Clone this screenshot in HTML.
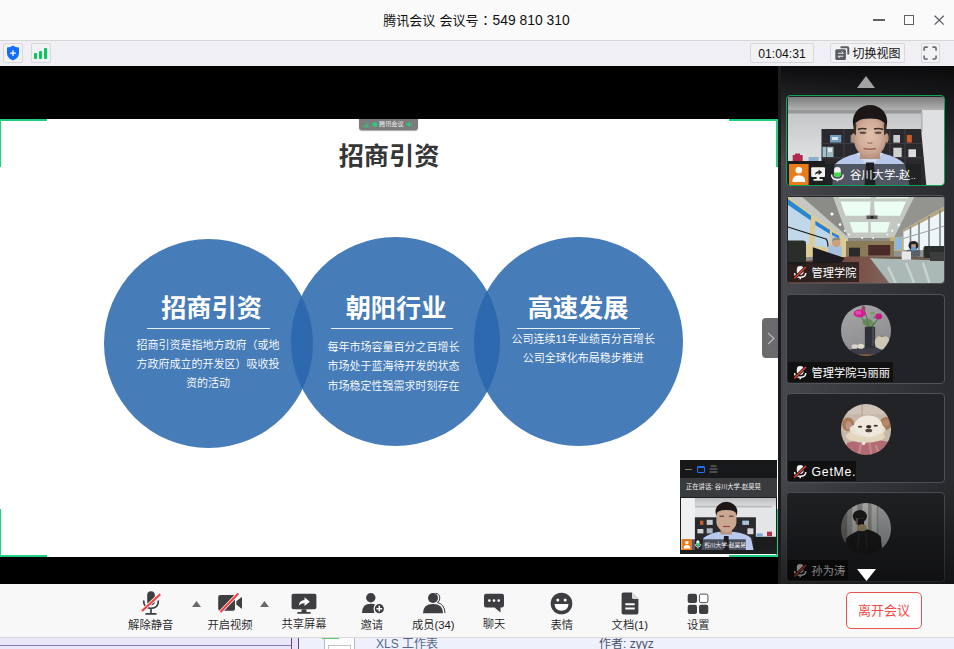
<!DOCTYPE html>
<html><head><meta charset="utf-8">
<style>
*{box-sizing:border-box;margin:0;padding:0}
html,body{width:954px;height:649px;overflow:hidden;background:#000;font-family:"Liberation Sans","Noto Sans CJK SC",sans-serif;}
.abs{position:absolute}
#titlebar{position:absolute;left:0;top:0;width:954px;height:41px;background:#fafafa;border-bottom:1px solid #d6d6d9}
#title{position:absolute;left:0;top:11px;width:954px;text-align:center;font-size:13px;color:#111;line-height:18px}
#bar2{position:absolute;left:0;top:41px;width:954px;height:25px;background:#f0f0f4}
.btn2{position:absolute;top:43px;height:20px;border:1px solid #d8d8dc;border-radius:2px;background:#f2f2f5;font-size:13px;color:#222;line-height:18px;text-align:center}
#main{position:absolute;left:0;top:66px;width:781px;height:518px;background:#000}
#slide{position:absolute;left:0;top:119px;width:778px;height:438px;background:#fff;overflow:hidden}
#right{position:absolute;left:781px;top:66px;width:173px;height:518px;background:#1b1c1e}
#bottombar{position:absolute;left:0;top:583.500px;width:954px;height:54px;background:#f8f8f9}
#strip{position:absolute;left:0;top:637.500px;width:954px;height:12px;background:#eef0fb;overflow:hidden}

#slide .circ{position:absolute;border-radius:50%;background:rgba(40,103,172,.86)}
.h2{position:absolute;color:#fff;font-weight:700;font-size:25.2px;line-height:30px;text-align:center;width:160px;white-space:nowrap}
.hr{position:absolute;height:1px;background:#e8f0f8}
.tx{position:absolute;color:#fff;font-weight:350;font-size:11px;line-height:19.4px;text-align:center;width:200px;white-space:nowrap}
#stitle{position:absolute;left:289px;top:21.5px;width:200px;text-align:center;font-weight:700;font-size:25.2px;line-height:30px;color:#363636}
.gl{position:absolute;background:#1fd17f}

#title{left:383.2px;top:11.3px;width:auto;text-align:left;white-space:nowrap;word-spacing:.7px}
#title .col{display:inline-block;width:14px;text-align:center;font-family:"Liberation Sans","Noto Sans CJK JP",sans-serif}
#title .num{font-size:13.9px;word-spacing:0}
.wc{position:absolute;background:#5f6168}

#right{background:linear-gradient(90deg,#46484d 0,#3a3c40 35%,#2a2b2e 100%);overflow:hidden}
#right .gt{position:absolute;left:0;top:0;width:173px;height:95px;background:linear-gradient(rgba(8,8,9,.93),rgba(8,8,9,.55) 35%,rgba(8,8,9,0));pointer-events:none}
#right .gb{position:absolute;left:0;top:410px;width:173px;height:108px;background:linear-gradient(rgba(0,0,0,0),rgba(0,0,0,.55));pointer-events:none}
.tile{position:absolute;left:5.300px;width:159px;height:90.500px;border:1px solid #505257;border-radius:4px;background:#222326;overflow:hidden}
.tile svg.ph{position:absolute;left:1px;top:1px}
.lab{position:absolute;left:1px;bottom:1px;height:20px;background:rgba(14,14,15,.82);color:#fff;font-size:11.200px;line-height:22.500px;padding-left:23.300px;padding-right:3px;white-space:nowrap;overflow:hidden}
.lab svg{position:absolute;left:5px;top:2.500px}
.av{position:absolute;left:53.700px;width:50.500px;height:50.500px;border-radius:50%;overflow:hidden}

#bottombar{border-bottom:1px solid #d9d9dc}
.tb{position:absolute;top:618px;font-size:11.300px;font-weight:350;line-height:14px;color:#1c1c1c;white-space:nowrap;transform:translateX(-50%)}
.ic{position:absolute}
#leave{position:absolute;left:846px;top:591.500px;width:76px;height:37px;border:1px solid #f0514f;border-radius:5px;background:#fefefe;color:#f04a48;font-size:13px;line-height:35px;text-align:center}

#split{position:absolute;left:778px;top:66px;width:3.500px;height:518px;background:#1a1b1d}
#handle{position:absolute;left:762px;top:318px;width:16px;height:40px;background:#6b6b6b;border-radius:4px 0 0 4px}
#mini{position:absolute;left:680px;top:460px;width:97px;height:94px;background:#1d1e20;overflow:hidden}
#tag{position:absolute;left:359px;top:119px;width:58.500px;height:10.500px;background:#7b7b7b;border-radius:0 0 3px 3px;box-shadow:0 .5px 1px rgba(0,0,0,.35)}
</style></head><body>
<div id="titlebar"></div>
<div id="title">腾讯会议 会议号<span class="col">：</span><span class="num">549 810 310</span></div>
<div class="wc" style="left:873px;top:19.3px;width:12px;height:1.4px"></div>
<div style="position:absolute;left:904px;top:15px;width:10px;height:10px;border:1.3px solid #5f6168"></div>
<svg style="position:absolute;left:933px;top:14px" width="13" height="13" viewBox="0 0 13 13"><path d="M1.6 1.8L10.8 10.6M10.8 1.8L1.6 10.6" stroke="#5f6168" stroke-width="1.3" fill="none"/></svg>
<div id="bar2"></div>
<div class="btn2" style="left:3.300px;width:19.500px"></div>
<svg style="position:absolute;left:6px;top:45px" width="14" height="16" viewBox="0 0 14 16"><path d="M7 .6C8.600 1.900 10.600 2.400 13 2.400V8c0 3.600-2.600 6-6 7.400C3.600 14 1 11.600 1 8V2.400C3.400 2.400 5.400 1.900 7 .6Z" fill="#0f6eff"/><path d="M7 5.200V11M4.100 8.100H9.900" stroke="#fff" stroke-width="1.300"/></svg>
<div class="btn2" style="left:31px;width:20px"></div>
<svg style="position:absolute;left:34px;top:47px" width="14" height="12" viewBox="0 0 14 12"><rect x="0" y="6" width="3.100" height="5.900" rx="1" fill="#09c45f"/><rect x="5" y="4" width="3.100" height="7.900" rx="1" fill="#09c45f"/><rect x="10" y=".9" width="3.100" height="11" rx="1" fill="#09c45f"/></svg>
<div class="btn2" style="left:750px;width:64px;font-size:12.2px;line-height:20.500px;color:#111">01:04:31</div>
<div class="btn2" style="left:830px;width:75px;font-size:12px;line-height:20px;text-align:left;padding-left:21.500px;color:#111">切换视图</div>
<svg style="position:absolute;left:835px;top:45.500px" width="15" height="15" viewBox="0 0 15 15"><path d="M5.500 1.300H12.300Q13.300 1.300 13.300 2.300V8.500" stroke="#5a5c64" stroke-width="2" fill="none"/><rect x=".3" y="3.300" width="10.600" height="10.800" rx="1.500" fill="#5a5c64"/><path d="M3 7.300H8.300M3 10.300H8.300" stroke="#e8e8ec" stroke-width="1.100"/><path d="M6.500 5.500L8.500 7.300M4.800 12.100L3 10.300" stroke="#e8e8ec" stroke-width="1"/></svg>
<div class="btn2" style="left:920.500px;width:19px"></div>
<svg style="position:absolute;left:923px;top:46px" width="14.200" height="14.200" viewBox="0 0 15 15"><path d="M1.200 5V2.500Q1.200 1.200 2.500 1.200H5M10 1.200H12.500Q13.800 1.200 13.800 2.500V5M13.800 10V12.500Q13.800 13.800 12.500 13.800H10M5 13.800H2.500Q1.200 13.800 1.200 12.500V10" stroke="#686a72" stroke-width="1.700" fill="none"/></svg>
<div id="main"></div>
<div id="slide">
<div id="stitle">招商引资</div>
<div class="circ" style="left:103.5px;top:119.5px;width:209px;height:209px"></div>
<div class="circ" style="left:290.5px;top:118px;width:209px;height:209px"></div>
<div class="circ" style="left:473.5px;top:118.2px;width:209px;height:209px"></div>
<div class="h2" style="left:131.5px;top:174.2px">招商引资</div>
<div class="h2" style="left:316px;top:174.2px">朝阳行业</div>
<div class="h2" style="left:498px;top:174.2px">高速发展</div>
<div class="hr" style="left:147px;top:209px;width:123px"></div>
<div class="hr" style="left:331px;top:209px;width:122px"></div>
<div class="hr" style="left:517px;top:209px;width:123px"></div>
<div class="tx" style="left:108px;top:216.5px">招商引资是指地方政府（或地<br>方政府成立的开发区）吸收投<br>资的活动</div>
<div class="tx" style="left:293.5px;top:219px">每年市场容量百分之百增长<br>市场处于蓝海待开发的状态<br>市场稳定性强需求时刻存在</div>
<div class="tx" style="left:483.3px;top:210.5px">公司连续11年业绩百分百增长<br>公司全球化布局稳步推进</div>
<div class="gl" style="left:0;top:0;width:47px;height:2px"></div>
<div class="gl" style="left:0;top:0;width:1px;height:48px"></div>
<div class="gl" style="left:729px;top:0;width:49px;height:2px"></div>
<div class="gl" style="left:776px;top:0;width:2px;height:48px"></div>
<div class="gl" style="left:0;top:436px;width:47px;height:2px"></div>
<div class="gl" style="left:729px;top:436px;width:49px;height:2px"></div>
<div class="gl" style="left:776px;top:390px;width:2px;height:48px"></div>
<div class="gl" style="left:0;top:390px;width:1px;height:48px"></div>
</div>
<div id="split"></div>
<div id="handle"><svg style="position:absolute;left:4.500px;top:13.500px" width="8" height="13" viewBox="0 0 8 13"><path d="M1 1L7 6.500L1 12" stroke="#bdbdbd" stroke-width="1.100" fill="none"/></svg></div>
<div id="tag"><svg style="position:absolute;left:3.500px;top:2px" width="15" height="7" viewBox="0 0 15 7"><path d="M.8 6.500V4.800M2.800 6.500V3.300M4.800 6.500V1.500" stroke="#27d07a" stroke-width="1.100"/><circle cx="11.800" cy="3.600" r="2.400" fill="#27d07a"/></svg><span style="position:absolute;left:20px;top:0;font-size:6.200px;line-height:10px;color:#f0f0f0;white-space:nowrap">腾讯会议</span><svg style="position:absolute;left:47px;top:2px" width="8" height="7" viewBox="0 0 8 7"><path d="M.5 2.500H2L4 .8V6.200L2 4.500H.5Z" fill="#27d07a"/><path d="M5.300 2Q6.500 3.500 5.300 5" stroke="#27d07a" stroke-width=".8" fill="none"/></svg></div>
<div id="mini">
<div style="position:absolute;left:0;top:0;width:97px;height:18px;background:#17181a"></div>
<div style="position:absolute;left:5px;top:8.500px;width:7px;height:1.300px;background:#7d7e82"></div>
<div style="position:absolute;left:17px;top:5.500px;width:8px;height:7px;border:1.300px solid #1f6fff;border-top-width:2px;border-radius:1.500px"></div>
<svg style="position:absolute;left:29px;top:5px" width="9" height="8" viewBox="0 0 9 8"><path d="M1.500 1H7.500M.5 4H8.500M.5 7H8.500" stroke="#7d7e82" stroke-width="1.200"/></svg>
<div style="position:absolute;left:0;top:18px;width:97px;height:18.500px;background:#3a3b3e"></div>
<div style="position:absolute;left:6px;top:18px;font-size:6.300px;line-height:18.500px;color:#f2f2f2;white-space:nowrap">正在讲话: 谷川大学-赵昊晃</div>
<svg style="position:absolute;left:1px;top:38px" width="95" height="52" viewBox="0 0 95 52"><defs><filter id="bm" x="-5%" y="-5%" width="110%" height="110%"><feGaussianBlur stdDeviation=".5"/></filter><linearGradient id="mg" x1="0" y1="0" x2="0" y2="1"><stop offset="0" stop-color="#b4b5b6"/><stop offset="1" stop-color="#dcdddf"/></linearGradient><clipPath id="cm"><rect width="95" height="52"/></clipPath></defs><g clip-path="url(#cm)"><g filter="url(#bm)">
<rect x="-2" y="-2" width="99" height="56" fill="#e3e5e7"/><rect x="-2" y="-2" width="99" height="10.500" fill="url(#mg)"/><rect x="13.900" y="7.800" width="77" height="1.600" fill="#b8b9ba"/><rect x="-2" y="-2" width="15.900" height="56" fill="#eef0f2"/>
<rect x="13.900" y="19.300" width="61" height="35" fill="#2a292d"/>
<rect x="19" y="22.600" width="3.400" height="4.300" fill="#c8602c"/><rect x="25.700" y="21.800" width="6" height="5.100" fill="#c8ccd0"/><rect x="16.400" y="31" width="6" height="4.400" fill="#d0d4d4"/><rect x="25.700" y="30.300" width="6" height="5.100" fill="#a8b8c0"/><rect x="61.300" y="22.600" width="6.700" height="4.300" fill="#a8c4dc"/><rect x="66.400" y="30.300" width="6" height="5.900" fill="#d8d8d8"/>
<rect x="72.400" y="38.700" width="25" height="16" rx="2" fill="#1c1c1e"/>
<rect x="86" y="33.700" width="5" height="4.500" fill="#b03050"/><rect x="75.700" y="35.400" width="6" height="3.300" fill="#7aa8d8"/>
<path d="M20 54L22.400 40Q28 35.500 38 33.700L45.200 36L52 33.700Q66 35.500 70 40L73 54Z" fill="#b8c8ee"/>
<rect x="39.500" y="30" width="11.500" height="6.500" fill="#b8947e"/>
<path d="M43 38H47.500L48.300 54H42.200Z" fill="#1b1b22"/>
<ellipse cx="45.400" cy="13.500" rx="10.900" ry="9.700" fill="#1b1819"/>
<path d="M35.400 17Q35.400 12 45.400 12Q55.400 12 55.400 17V25Q55 31 45.400 35Q36 31 35.400 25Z" fill="#c9a791"/>
<path d="M38.500 18.200H43M48 18.200H52.500" stroke="#3a2a26" stroke-width="1"/><path d="M42 28.500H49" stroke="#8a4a44" stroke-width="1.200"/>
</g>
<rect x=".8" y="41.300" width="64" height="10.700" fill="rgba(30,31,34,.72)"/><rect x=".8" y="41.300" width="10.200" height="10.700" fill="#ea7b1b"/>
<circle cx="5.900" cy="44.600" r="1.700" fill="#fff"/><path d="M2.500 50.500Q2.500 47 5.900 47Q9.300 47 9.300 50.500Z" fill="#fff"/>
<rect x="15.300" y="42.300" width="3.200" height="5.400" rx="1.600" fill="#f2f2f2"/><rect x="15.300" y="45" width="3.200" height="2.700" rx="1.300" fill="#2fd06e"/><path d="M14 46Q14 49 16.900 49Q19.800 49 19.800 46M16.900 49V50.800" stroke="#f2f2f2" stroke-width=".8" fill="none"/>
</g>
<text x="23.200" y="49" font-family="Liberation Sans, Noto Sans CJK SC, sans-serif" font-size="5.700" fill="#fff">谷川大学-赵昊晃</text></svg>
</div>
<div id="right">
<svg style="position:absolute;left:76px;top:10px;z-index:4" width="18" height="12" viewBox="0 0 18 12"><path d="M9 0L18 12H0Z" fill="#a3a3a3"/></svg>
<div class="tile" id="t1" style="top:29px;border-color:#10a254;z-index:3"><!--T1--><svg class="ph" width="157" height="88" viewBox="0 0 157 88"><defs><linearGradient id="t1w" x1="0" y1="0" x2="0" y2="1"><stop offset=".18" stop-color="#c4c5c6"/><stop offset=".6" stop-color="#dbdcdd"/></linearGradient><radialGradient id="t1f" cx=".5" cy=".42" r=".62"><stop offset="0" stop-color="#dfc0ae"/><stop offset=".6" stop-color="#d0ac98"/><stop offset="1" stop-color="#b08a76"/></radialGradient><linearGradient id="t1c" x1="0" y1="0" x2="0" y2="1"><stop offset="0" stop-color="#707070"/><stop offset="1" stop-color="#b4b4b4"/></linearGradient><filter id="b1" x="-5%" y="-5%" width="110%" height="110%"><feGaussianBlur stdDeviation=".55"/></filter><clipPath id="c1"><rect width="157" height="88"/></clipPath></defs>
<g clip-path="url(#c1)"><g filter="url(#b1)">
<rect x="-3" y="-3" width="163" height="94" fill="url(#t1w)"/>
<rect x="-3" y="-3" width="163" height="16.500" fill="url(#t1c)"/>
<rect x="-3" y="13" width="138" height="3.600" fill="#989898"/>
<rect x="134" y="13" width="26" height="78" fill="#dfe0e1"/>
<rect x="133" y="15" width="1.600" height="20" fill="#b4b4b4"/>
<path d="M33.500 32H133L138.500 90H33.500Z" fill="#2a292d"/>
<path d="M33.500 46.500H134M33.500 60.700H136M55.900 32V90M102 32V90M117 32V90" stroke="#3d3c41" stroke-width="1.200"/>
<rect x="42" y="38" width="11.300" height="7.600" fill="#6f9cc0"/><rect x="44" y="40" width="6" height="3" fill="#d8e4ea"/>
<rect x="62.600" y="38" width="5.800" height="7.600" fill="#8090a0"/>
<rect x="105.300" y="38" width="6.700" height="7.600" fill="#c8ccd0"/>
<rect x="118.800" y="38" width="5" height="7.600" fill="#c9602b"/>
<rect x="34.500" y="49.800" width="3.500" height="10.200" fill="#a0c0d0"/><rect x="38.500" y="49.800" width="7" height="10.200" fill="#9bb9bf"/><rect x="40" y="51" width="4" height="4" fill="#e0e8e8"/>
<rect x="105.300" y="50.700" width="8.400" height="9.300" fill="#cfd0d0"/>
<rect x="120.400" y="52.300" width="7.600" height="7.700" fill="#dcdcdc"/>
<rect x="105" y="63" width="6" height="8" fill="#9aa0a4"/>
<rect x="4.700" y="58" width="10" height="6" fill="#b02c50"/><rect x="7" y="56.500" width="5" height="2" fill="#b02c50"/>
<rect x="20.600" y="60" width="10" height="4.500" fill="#8aaed0"/>
<rect x="-3" y="64" width="40" height="27" fill="#1c1c1f"/>
<path d="M44 90L46.600 67.400Q54 60 68.400 56.500L82 60L95.300 56.500Q110 60 117 67.400L122 90Z" fill="#b8c7ea"/>
<path d="M68.400 56.500L82 71L95.300 56.500L90 54H74Z" fill="#d3dcf3"/>
<rect x="71.800" y="52" width="20.400" height="10" fill="#b8947e"/>
<path d="M78 65.500H86L87.500 90H76.500Z" fill="#1b1b22"/>
<ellipse cx="65.500" cy="41" rx="2" ry="4.800" fill="#b8927c"/><ellipse cx="98.600" cy="41" rx="2" ry="4.800" fill="#b8927c"/>
<ellipse cx="82" cy="24.500" rx="17.200" ry="16.500" fill="#1b1819"/>
<path d="M66.300 31Q66.300 21.500 82 21.500Q97.700 21.500 97.700 31V45Q97 56 82 62.500Q67 56 66.300 45Z" fill="url(#t1f)"/>
<path d="M65.300 27H68.300L67.800 38.500L65.800 36.500ZM98.700 27H95.700L96.200 38.500L98.200 36.500Z" fill="#3a2e2b"/>
<ellipse cx="75" cy="35.600" rx="3.800" ry="1.600" fill="#8a6a5c" opacity=".55"/><ellipse cx="90" cy="35.600" rx="3.800" ry="1.600" fill="#8a6a5c" opacity=".55"/>
<path d="M70 32.500Q74 30.600 78.500 32M86 32Q90.500 30.600 95.300 32.500" stroke="#3a2a26" stroke-width="1.500" fill="none"/>
<path d="M72 35.800H77.500M87.500 35.800H93" stroke="#3a2c28" stroke-width="1.300"/>
<path d="M79.500 45.500Q82 47 84.500 45.500" stroke="#9a7462" stroke-width="1.200" fill="none"/>
<path d="M75.500 51.500Q82 53 88 51.500" stroke="#a55e58" stroke-width="1.500" fill="none"/>
</g>
<rect x="0" y="67" width="133" height="21" fill="rgba(30,31,34,.68)"/>
<rect x="1" y="67" width="19.600" height="21" fill="#ea7b1b"/>
<circle cx="10.800" cy="73.300" r="3.300" fill="#fff"/><path d="M4.300 85Q4.300 78.300 10.800 78.300Q17.300 78.300 17.300 85Z" fill="#fff"/>
<rect x="23.200" y="70.300" width="13.800" height="9.600" rx="1" fill="#f2f2f2"/><rect x="25.500" y="82" width="9.200" height="1.700" fill="#f2f2f2"/><rect x="28.600" y="79.900" width="3" height="2.100" fill="#f2f2f2"/>
<path d="M26.800 77.800Q27.300 74.300 30.700 74.200V72.500L34.200 75.300L30.700 78V76.200Q28.300 76.200 26.800 77.800Z" fill="#26272a"/>
<rect x="46.100" y="70" width="6.600" height="10" rx="3.300" fill="#f2f2f2"/><rect x="46.100" y="76" width="6.600" height="4" rx="2.500" fill="#3ddc44"/><rect x="46.100" y="75.500" width="6.600" height="2.500" fill="#3ddc44"/>
<path d="M43.600 77.500Q43.600 82.600 49.400 82.600Q55.200 82.600 55.200 77.500M49.400 82.600V84.300" stroke="#f2f2f2" stroke-width="1.500" fill="none"/>
</g>
<text x="62" y="82" font-family="Liberation Sans, Noto Sans CJK SC, sans-serif" font-size="11.300" fill="#fff">谷川大学-赵<tspan font-size="9" dx=".5">..</tspan></text>
</svg><!--/T1--></div>
<div class="tile" id="t2" style="top:128.500px;height:89.500px"><!--T2--><svg class="ph" width="157" height="88" viewBox="0 0 157 88"><defs><filter id="b2" x="-5%" y="-5%" width="110%" height="110%"><feGaussianBlur stdDeviation=".6"/></filter><clipPath id="c2"><rect width="157" height="88"/></clipPath><linearGradient id="tb2" x1="0" y1="0" x2="1" y2="0"><stop offset="0" stop-color="#5e3a34"/><stop offset=".45" stop-color="#7a5046"/><stop offset="1" stop-color="#8b8f8c"/></linearGradient></defs>
<g clip-path="url(#c2)"><g filter="url(#b2)">
<rect x="-3" y="-3" width="163" height="94" fill="#8b8b87"/>
<path d="M44 -3H128L106 41H60Z" fill="#c4c8c3"/>
<path d="M52.500 4.500H82.700L81.500 18.800H57.500Z" fill="#ecfff3"/><path d="M86 4.500H118L112 18.800H87Z" fill="#ecfff3"/>
<path d="M50 -3H82.500V1.600H51.500Z" fill="#e2f2e6"/><path d="M88 -3H122L120 1.600H88Z" fill="#e2f2e6"/>
<path d="M61.700 25H80.200V35.600H65Z" fill="#e8fcf0"/><path d="M82.700 25H102L99 35.600H83Z" fill="#e8fcf0"/>
<rect x="78.500" y="18.500" width="11" height="3.600" fill="#5a5a58"/><circle cx="84" cy="20.300" r="1.500" fill="#222"/>
<g fill="#fff"><circle cx="44" cy="17" r="1.600"/><circle cx="52" cy="27.500" r="1.300"/><circle cx="122" cy="18.300" r="1.500"/><circle cx="110.700" cy="27.900" r="1.300"/><circle cx="142" cy="1" r="2"/><circle cx="56.700" cy="33.700" r="1"/><circle cx="104.200" cy="33.700" r="1"/><circle cx="74.300" cy="41" r=".9"/><circle cx="85.200" cy="41" r=".9"/><circle cx="60.900" cy="37.600" r=".9"/><circle cx="99.500" cy="37.600" r=".9"/></g>
<path d="M-3 -3L28 18L60 41V60H-3Z" fill="#dccb94"/>
<path d="M-3 -3H11L60 40V43L28 20Z" fill="#c6c6c2"/>
<path d="M0 2L23.200 18.800L20.600 47.300L-3 45.600Z" fill="#c0d8ea"/><path d="M0 2L23.200 18.800L22.800 23.500L0 8Z" fill="#2c88cf"/>
<path d="M27.400 23.800L42 33L41.300 50.700L26.500 49Z" fill="#bcd6ea"/><path d="M27.400 23.800L42 33L41.800 37L27.300 28Z" fill="#2c7fd0"/>
<path d="M44.100 35.200L51.300 39L51 47.300L43.800 47.300Z" fill="#a8c8e4"/><path d="M44.100 35.200L51.300 39L51.200 41.500L44 38Z" fill="#2c7fd0"/>
<path d="M106 41L128 -3H160V60H106Z" fill="#93948f"/>
<path d="M115.400 33L160 7.500V53H115.400Z" fill="#eef4f7"/>
<path d="M115.400 33L160 7.500V12L115.400 35Z" fill="#b4a67a"/>
<path d="M122.500 30V53M131 25V53M141 19V53M152 13V53" stroke="#7f8a86" stroke-width="1.600"/>
<path d="M115.400 41.500L160 28" stroke="#9aa4a0" stroke-width="1"/>
<rect x="102" y="40" width="13.400" height="14" fill="#c8b070"/><path d="M107 41.500L113.700 39V53H107Z" fill="#8ab8e0"/>
<rect x="58" y="44" width="48" height="16" fill="#8a7a58"/>
<rect x="80.200" y="48" width="22" height="10.500" fill="#4c2c2c"/>
<rect x="61" y="50.700" width="11" height="9.300" fill="#2a2a2a"/>
<path d="M-3 66L62 59.500H160V91H-3Z" fill="url(#tb2)"/>
<path d="M82 61L160 63.600V91H105Z" fill="#aab9b6"/>
<path d="M100 70L110 91M118 66L128 91M135 66L143 91" stroke="#d4dedc" stroke-width="2.500" opacity=".7"/>
<path d="M82 61L160 63.600V60H82Z" fill="#6a5a50"/>
<rect x="-3" y="43.500" width="21" height="24" rx="3" fill="#2c2e2c"/>
<path d="M0 30Q25 38 38 42Q40 44 40 50" stroke="#151515" stroke-width="1.100" fill="none"/>
<rect x="40" y="48.500" width="14" height="11" rx="2" fill="#a8c0e0"/>
<ellipse cx="48.300" cy="45.500" rx="4.300" ry="4.700" fill="#c8a084"/><path d="M44 44Q44.500 40.500 48.500 40.500Q52 40.600 52.600 43Q48 42 44 44Z" fill="#8a8680"/>
<path d="M24.800 50.200L56.700 61L53.300 65.500L24.800 66.500Z" fill="#1c1e22"/>
<rect x="118.700" y="52.700" width="13.500" height="7" rx="2" fill="#5a6068"/>
<ellipse cx="125.500" cy="48.500" rx="5" ry="4.600" fill="#2a2224"/><rect x="123" y="50" width="5.200" height="3.500" rx="1" fill="#6a9ad0"/><rect x="123.300" y="47.300" width="4.500" height="2.700" fill="#c0a08c"/>
<rect x="113.700" y="54.400" width="9.300" height="8.300" fill="#e8e8e8"/>
<rect x="135.500" y="49" width="24" height="12" rx="2" fill="#2a2e2c"/>
<rect x="142" y="55" width="18" height="9" fill="#3a3e3c"/>
</g>

</g></svg><!--/T2--><div class="lab" style="background:rgba(24,22,22,.74)"><svg width="14" height="16" viewBox="0 0 14 16"><rect x="3.800" y="1" width="6.800" height="9" rx="3.400" fill="#f2f2f2"/><path d="M1.600 8Q1.600 12.300 7.200 12.300Q12.800 12.300 12.800 8M7.200 12.300V14.300" stroke="#f2f2f2" stroke-width="1.500" fill="none"/><path d="M13 2L1.200 13.500" stroke="#161616" stroke-width="3"/><path d="M13 2L1.200 13.500" stroke="#ec4030" stroke-width="1.500"/></svg>管理学院</div></div>
<div class="tile" id="t3" style="top:227.500px"><div class="av" id="a1" style="top:10.500px"><!--A1--><svg width="51" height="51" viewBox="0 0 50 50"><defs><filter id="b3" x="-5%" y="-5%" width="110%" height="110%"><feGaussianBlur stdDeviation=".45"/></filter><linearGradient id="g3" x1="0" y1="0" x2=".4" y2="1"><stop offset="0" stop-color="#a9a9ab"/><stop offset="1" stop-color="#8a8a8d"/></linearGradient></defs><g filter="url(#b3)">
<rect x="-2" y="-2" width="54" height="54" fill="url(#g3)"/>
<rect x="-2" y="44" width="54" height="8" fill="#55504c"/>
<path d="M8 44Q20 40 39 42L42 52H10Z" fill="#3c3c46"/>
<rect x="14" y="48.500" width="22" height="1.500" fill="#9a6a40"/>
<path d="M20 12L27 22M23 5L28 22M36 14L30 22M25 16L29 22M33 17L29 22" stroke="#4a7a40" stroke-width="1" fill="none"/>
<ellipse cx="26" cy="17" rx="5" ry="3.500" fill="#5c8652" opacity=".8"/><ellipse cx="31" cy="8" rx="2.500" ry="1.200" fill="#7c9a6c"/><ellipse cx="34" cy="12" rx="2.500" ry="1" fill="#5c8652"/>
<rect x="23.400" y="21.300" width="10.100" height="21" rx="1" fill="#2e3338"/><rect x="30.500" y="22" width="2" height="18" fill="#4a5258" opacity=".8"/>
<ellipse cx="18.300" cy="8.300" rx="5.900" ry="3.900" fill="#d41b93"/><ellipse cx="17" cy="7.500" rx="3" ry="1.800" fill="#e848b0"/>
<ellipse cx="37" cy="11.200" rx="3.300" ry="2.800" fill="#c21a82"/>
<ellipse cx="22" cy="3.300" rx="2" ry="2.300" fill="#a04466"/>
<ellipse cx="40.400" cy="36.600" rx="7.300" ry="7" fill="#cbc7b4"/><ellipse cx="40.400" cy="30.300" rx="3" ry="1" fill="#8a8676"/>
<ellipse cx="13.500" cy="40.700" rx="3.200" ry="2.300" fill="#d8d4c8"/><ellipse cx="19.500" cy="40.500" rx="3.200" ry="2.500" fill="#dedad0"/>
</g></svg><!--/A1--></div><div class="lab"><svg width="14" height="16" viewBox="0 0 14 16"><rect x="3.800" y="1" width="6.800" height="9" rx="3.400" fill="#f2f2f2"/><path d="M1.600 8Q1.600 12.300 7.200 12.300Q12.800 12.300 12.800 8M7.200 12.300V14.300" stroke="#f2f2f2" stroke-width="1.500" fill="none"/><path d="M13 2L1.200 13.500" stroke="#161616" stroke-width="3"/><path d="M13 2L1.200 13.500" stroke="#ec4030" stroke-width="1.500"/></svg>管理学院马丽丽</div></div>
<div class="tile" id="t4" style="top:326.500px"><div class="av" id="a2" style="top:10.500px"><!--A2--><svg width="51" height="51" viewBox="0 0 50 50"><defs><filter id="b4" x="-5%" y="-5%" width="110%" height="110%"><feGaussianBlur stdDeviation=".6"/></filter></defs><g filter="url(#b4)">
<rect x="-2" y="-2" width="54" height="54" fill="#c6b7a9"/><rect x="-2" y="-2" width="54" height="12" fill="#cfc3b7"/>
<rect x="20" y="-2" width="1.200" height="16" fill="#b4a598"/>
<path d="M3 52L6 38Q24 32 46 37L49 52Z" fill="#b06c72"/>
<path d="M17 52L20 38M30 52L28 38M38 52L34 40" stroke="#c4868a" stroke-width="2.200"/>
<ellipse cx="7" cy="20" rx="5.800" ry="6.800" fill="#a87a54"/><ellipse cx="7.500" cy="21" rx="3" ry="4" fill="#c09484"/>
<ellipse cx="44" cy="19" rx="5.800" ry="6.300" fill="#a87a54"/><ellipse cx="44" cy="18.500" rx="3" ry="3.500" fill="#b48a6c"/>
<ellipse cx="24" cy="31.500" rx="19" ry="6.500" fill="#e2d6be"/>
<ellipse cx="26" cy="25" rx="17.500" ry="7" fill="#e9e1d2"/><ellipse cx="26.800" cy="21.800" rx="14" ry="10.500" fill="#efe9dd"/>
<ellipse cx="27.200" cy="22.300" rx="2.600" ry="1.600" fill="#3a2a28"/><ellipse cx="27.200" cy="26" rx="3.400" ry="1.800" fill="#54423e"/>
<ellipse cx="18.700" cy="22.300" rx="2.200" ry=".9" fill="#4a3a36"/><ellipse cx="34" cy="21.300" rx="2.200" ry=".9" fill="#4a3a36"/>
<circle cx="22.200" cy="38.600" r="1.600" fill="#f6f2ee"/>
</g></svg><!--/A2--></div><div class="lab" style="font-size:12.300px;letter-spacing:.7px;padding-right:0"><svg width="14" height="16" viewBox="0 0 14 16"><rect x="3.800" y="1" width="6.800" height="9" rx="3.400" fill="#f2f2f2"/><path d="M1.600 8Q1.600 12.300 7.200 12.300Q12.800 12.300 12.800 8M7.200 12.300V14.300" stroke="#f2f2f2" stroke-width="1.500" fill="none"/><path d="M13 2L1.200 13.500" stroke="#161616" stroke-width="3"/><path d="M13 2L1.200 13.500" stroke="#ec4030" stroke-width="1.500"/></svg>GetMe.</div></div>
<div class="tile" id="t5" style="top:425.500px"><div class="av" id="a3" style="top:10.500px"><!--A3--><svg width="51" height="51" viewBox="0 0 50 50"><defs><filter id="b5" x="-5%" y="-5%" width="110%" height="110%"><feGaussianBlur stdDeviation=".6"/></filter></defs><g filter="url(#b5)">
<rect x="-2" y="-2" width="54" height="54" fill="#8e8e8c"/>
<rect x="-2" y="-2" width="8" height="54" fill="#6c6c6a"/>
<rect x="11" y="-2" width="5" height="54" fill="#b4b4b2"/><rect x="21" y="-2" width="5.500" height="54" fill="#bcbcba"/><rect x="30" y="-2" width="5" height="54" fill="#b6b6b4"/>
<rect x="36.500" y="-2" width="16" height="54" fill="#a3a5a7"/>
<path d="M1 52L5.500 34Q13 27.500 23 25.500Q34 27 39 33L41 52Z" fill="#1d1b1d"/>
<ellipse cx="18.500" cy="13" rx="6.900" ry="6.200" fill="#1f1b1b"/>
<rect x="14.500" y="15" width="8" height="6" fill="#6a5848"/>
<rect x="16.600" y="15.300" width="6" height="8.700" rx="1" fill="#18181a"/>
<ellipse cx="20.500" cy="24.300" rx="4.500" ry="3.500" fill="#a48c6c"/>
<path d="M18 28L16 45M24 28L26 45" stroke="#2c2a2c" stroke-width="1.500"/>
</g></svg><!--/A3--></div><div class="lab"><svg width="14" height="16" viewBox="0 0 14 16"><rect x="3.800" y="1" width="6.800" height="9" rx="3.400" fill="#f2f2f2"/><path d="M1.600 8Q1.600 12.300 7.200 12.300Q12.800 12.300 12.800 8M7.200 12.300V14.300" stroke="#f2f2f2" stroke-width="1.500" fill="none"/><path d="M13 2L1.200 13.500" stroke="#161616" stroke-width="3"/><path d="M13 2L1.200 13.500" stroke="#ec4030" stroke-width="1.500"/></svg>孙为涛</div></div>
<div class="gt"></div><div class="gb"></div>
<svg style="position:absolute;left:76px;top:503px;z-index:4" width="19" height="12" viewBox="0 0 19 12"><path d="M0 0H19L9.500 12Z" fill="#fff"/></svg>
</div>
<div id="bottombar"></div>
<svg class="ic" style="left:140px;top:590px" width="22" height="26" viewBox="0 0 22 26"><rect x="7.200" y="1.300" width="7.600" height="14" rx="3.800" fill="#3d3d42"/><path d="M3.600 10.500Q3.600 18.300 11 18.300Q18.400 18.300 18.400 10.500M11 18.300V23.300M5.500 23.800H16.500" stroke="#3d3d42" stroke-width="1.700" fill="none"/><path d="M20.300 4.200L2 21" stroke="#f5f5f6" stroke-width="3.600"/><path d="M20.300 4.200L2 21" stroke="#fb3b3b" stroke-width="2"/></svg>
<div class="tb" style="left:150.700px">解除静音</div>
<svg class="ic" style="left:191.500px;top:601px" width="9" height="6" viewBox="0 0 9 6"><path d="M4.500 0L9 6H0Z" fill="#6a6a6e"/></svg>
<svg class="ic" style="left:217px;top:592px" width="27" height="22" viewBox="0 0 27 22"><rect x="1.200" y="3" width="16.800" height="15.700" rx="2" fill="#3d3d42"/><path d="M19.300 9.300L24.300 5.300Q25 4.800 25 5.800V16Q25 17 24.300 16.500L19.300 12.500Z" fill="#3d3d42"/><path d="M21.300 1.500L3.500 20" stroke="#f5f5f6" stroke-width="3.600"/><path d="M21.300 1.500L3.500 20" stroke="#fb3b3b" stroke-width="2"/></svg>
<div class="tb" style="left:230px">开启视频</div>
<svg class="ic" style="left:260px;top:601px" width="9" height="6" viewBox="0 0 9 6"><path d="M4.500 0L9 6H0Z" fill="#6a6a6e"/></svg>
<svg class="ic" style="left:291px;top:593px" width="26" height="22" viewBox="0 0 26 22"><rect x=".6" y=".8" width="24.800" height="15.500" rx="1.800" fill="#3d3d42"/><rect x="10.500" y="16.300" width="5" height="2.700" fill="#3d3d42"/><rect x="6.300" y="19" width="13.400" height="1.800" rx=".5" fill="#3d3d42"/><path d="M7.800 12.500Q8.500 7.300 13.500 7.100V4.300L18.800 8.700L13.500 13V10.300Q10.200 10.200 7.800 12.500Z" fill="#fff"/></svg>
<div class="tb" style="left:304px;top:617px">共享屏幕</div>
<svg class="ic" style="left:361px;top:592px" width="24" height="22" viewBox="0 0 24 22"><circle cx="9.800" cy="5.800" r="4.700" fill="#3d3d42"/><path d="M1 21Q1 11.800 9.800 11.800Q13 11.800 15 13.200Q12.300 15.800 13.300 21Z" fill="#3d3d42"/><circle cx="18.300" cy="16.700" r="5.200" fill="#3d3d42" stroke="#f8f8f9" stroke-width="1.200"/><path d="M18.300 13.800V19.600M15.400 16.700H21.200" stroke="#fff" stroke-width="1.500"/></svg>
<div class="tb" style="left:371.700px">邀请</div>
<svg class="ic" style="left:422px;top:592px" width="24" height="22" viewBox="0 0 24 22"><path d="M13.500 1.200Q17.800 1.800 17.800 6Q17.800 9.500 15.300 10.500Q22.500 12 23 21" stroke="#3d3d42" stroke-width="1" fill="none"/><circle cx="11" cy="6" r="5" fill="#3d3d42"/><path d="M1 21.200Q1 12 11 12Q21 12 21 21.200Z" fill="#3d3d42"/></svg>
<div class="tb" style="left:433.300px">成员(34)</div>
<svg class="ic" style="left:483px;top:593px" width="22" height="21" viewBox="0 0 22 21"><path d="M3.200 .8H18.800Q21 .8 21 3V12.300Q21 14.500 18.800 14.500H17.500V19.500L11.500 14.500H3.200Q1 14.500 1 12.300V3Q1 .8 3.200 .8Z" fill="#3d3d42"/><circle cx="6.300" cy="7.600" r="1.300" fill="#fff"/><circle cx="11" cy="7.600" r="1.300" fill="#fff"/><circle cx="15.700" cy="7.600" r="1.300" fill="#fff"/></svg>
<div class="tb" style="left:494px;top:617px">聊天</div>
<svg class="ic" style="left:550px;top:592px" width="23" height="23" viewBox="0 0 23 23"><circle cx="11.500" cy="11.500" r="10.800" fill="#3d3d42"/><circle cx="7.800" cy="8" r="1.500" fill="#fff"/><circle cx="15.200" cy="8" r="1.500" fill="#fff"/><path d="M4.500 12H18.500Q18 18.800 11.500 18.800Q5 18.800 4.500 12Z" fill="#fff"/></svg>
<div class="tb" style="left:561.700px">表情</div>
<svg class="ic" style="left:621px;top:591.500px" width="18" height="23" viewBox="0 0 18 23"><path d="M2.500 .6H11L17.400 7V20.500Q17.400 22.400 15.500 22.400H2.500Q.6 22.400 .6 20.500V2.500Q.6 .6 2.500 .6Z" fill="#3d3d42"/><path d="M11 .6V5.500Q11 7 12.500 7H17.400Z" fill="#f8f8f9" opacity=".85"/><path d="M4.300 12.300H13.700M4.300 16.600H13.700" stroke="#fff" stroke-width="2"/></svg>
<div class="tb" style="left:629.800px">文档(1)</div>
<svg class="ic" style="left:687px;top:592.500px" width="22" height="22" viewBox="0 0 22 22"><rect x=".7" y=".7" width="9.300" height="9.300" rx="2" fill="#3d3d42"/><rect x="12.400" y="1.100" width="8.500" height="8.500" rx="1.600" fill="#fff" stroke="#3d3d42" stroke-width=".9"/><rect x=".7" y="11.800" width="9.300" height="9.300" rx="2" fill="#3d3d42"/><rect x="12" y="11.800" width="9.300" height="9.300" rx="2" fill="#3d3d42"/></svg>
<div class="tb" style="left:698.300px">设置</div>
<div id="leave">离开会议</div>
<div id="strip">
<div style="position:absolute;left:0;top:0;width:291px;height:12px;background:#e9e7f9"></div>
<div style="position:absolute;left:0;top:7.500px;width:291px;height:1.200px;background:#8d7cbc"></div>
<div style="position:absolute;left:291px;top:0;width:1.200px;height:12px;background:#5b4a8a"></div>
<div style="position:absolute;left:292.200px;top:0;width:6px;height:12px;background:#ecdff8"></div>
<div style="position:absolute;left:298px;top:0;width:1.200px;height:12px;background:#5b4a8a"></div>
<div style="position:absolute;left:323.500px;top:-3px;width:31.500px;height:20px;background:#fdfdfd;border:1px solid #b9bbc0"></div>
<div style="position:absolute;left:320.500px;top:-1px;width:19px;height:2.500px;background:#5cc878;border-radius:0 0 3px 3px"></div>
<div style="position:absolute;left:328px;top:7px;width:23px;height:10px;border:1px solid #c4c4c8"></div>
<div style="position:absolute;left:376px;top:-.5px;font-size:12px;line-height:14px;color:#55688c;white-space:nowrap">XLS 工作表</div>
<div style="position:absolute;left:599px;top:-.5px;font-size:12px;line-height:14px;color:#4d5470;white-space:nowrap">作者: zyyz</div>
</div>
</body></html>
